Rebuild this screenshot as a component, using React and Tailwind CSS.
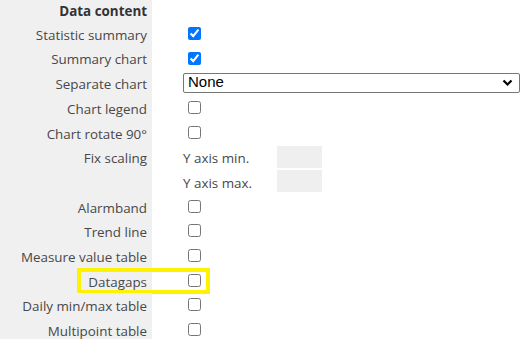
import React from 'react';

const rows = [
  { label: 'Statistic summary', type: 'check', checked: true },
  { label: 'Summary chart', type: 'check', checked: true },
  { label: 'Separate chart', type: 'select' },
  { label: 'Chart legend', type: 'check' },
  { label: 'Chart rotate 90°', type: 'check' },
  { label: 'Fix scaling', type: 'input', sub: 'Y axis min.' },
  { label: '', type: 'input', sub: 'Y axis max.' },
  { label: 'Alarmband', type: 'check' },
  { label: 'Trend line', type: 'check' },
  { label: 'Measure value table', type: 'check' },
  { label: 'Datagaps', type: 'check', highlight: true },
  { label: 'Daily min/max table', type: 'check' },
  { label: 'Multipoint table', type: 'check' },
];

const Row = ({ item }) => (
  <div className="relative flex h-[24.7px] items-center">
    <div className="flex h-full w-[152px] shrink-0 items-center justify-end bg-[#f0f0f0] pr-[5px] pt-[3px]">
      {item.label}
    </div>
    <div className="flex h-full flex-1 items-center">
      {item.type === 'check' && (
        <input
          type="checkbox"
          defaultChecked={item.checked}
          className="ml-[36px] m-0 h-[13px] w-[13px] accent-[#0075ff]"
        />
      )}
      {item.type === 'select' && (
        <div className="ml-[31px] flex h-[20px] w-[337px] items-center justify-between rounded-[2px] border border-[#767676] bg-white pl-[4px] pr-[6px] font-['Liberation_Sans',sans-serif] text-[15px] text-black">
          <span>None</span>
          <svg width="11" height="8" viewBox="0 0 11 8">
            <path d="M1.5 1.5 L5.5 5.5 L9.5 1.5" fill="none" stroke="#000" strokeWidth="2.2" />
          </svg>
        </div>
      )}
      {item.type === 'input' && (
        <div className="ml-[31px] flex items-center">
          <span className="w-[94px] pt-[3px]">{item.sub}</span>
          <div className="h-[22px] w-[45px] bg-[#efefef]" />
        </div>
      )}
    </div>
    {item.highlight && (
      <div className="pointer-events-none absolute left-[77px] top-0 h-[26px] w-[133px] border-[4px] border-[#fff200]" />
    )}
  </div>
);

export default function App() {
  return (
    <div className="h-[339px] w-[526px] overflow-hidden bg-white font-['Open_Sans',sans-serif] text-[13.4px] text-[#484848]">
      <div className="flex h-[21px] items-center">
        <div className="flex h-full w-[152px] items-center justify-end bg-[#f0f0f0] pr-[5px] pt-[1px] font-bold text-[#333]">
          Data content
        </div>
      </div>
      {rows.map((item, i) => (
        <Row key={i} item={item} />
      ))}
    </div>
  );
}
